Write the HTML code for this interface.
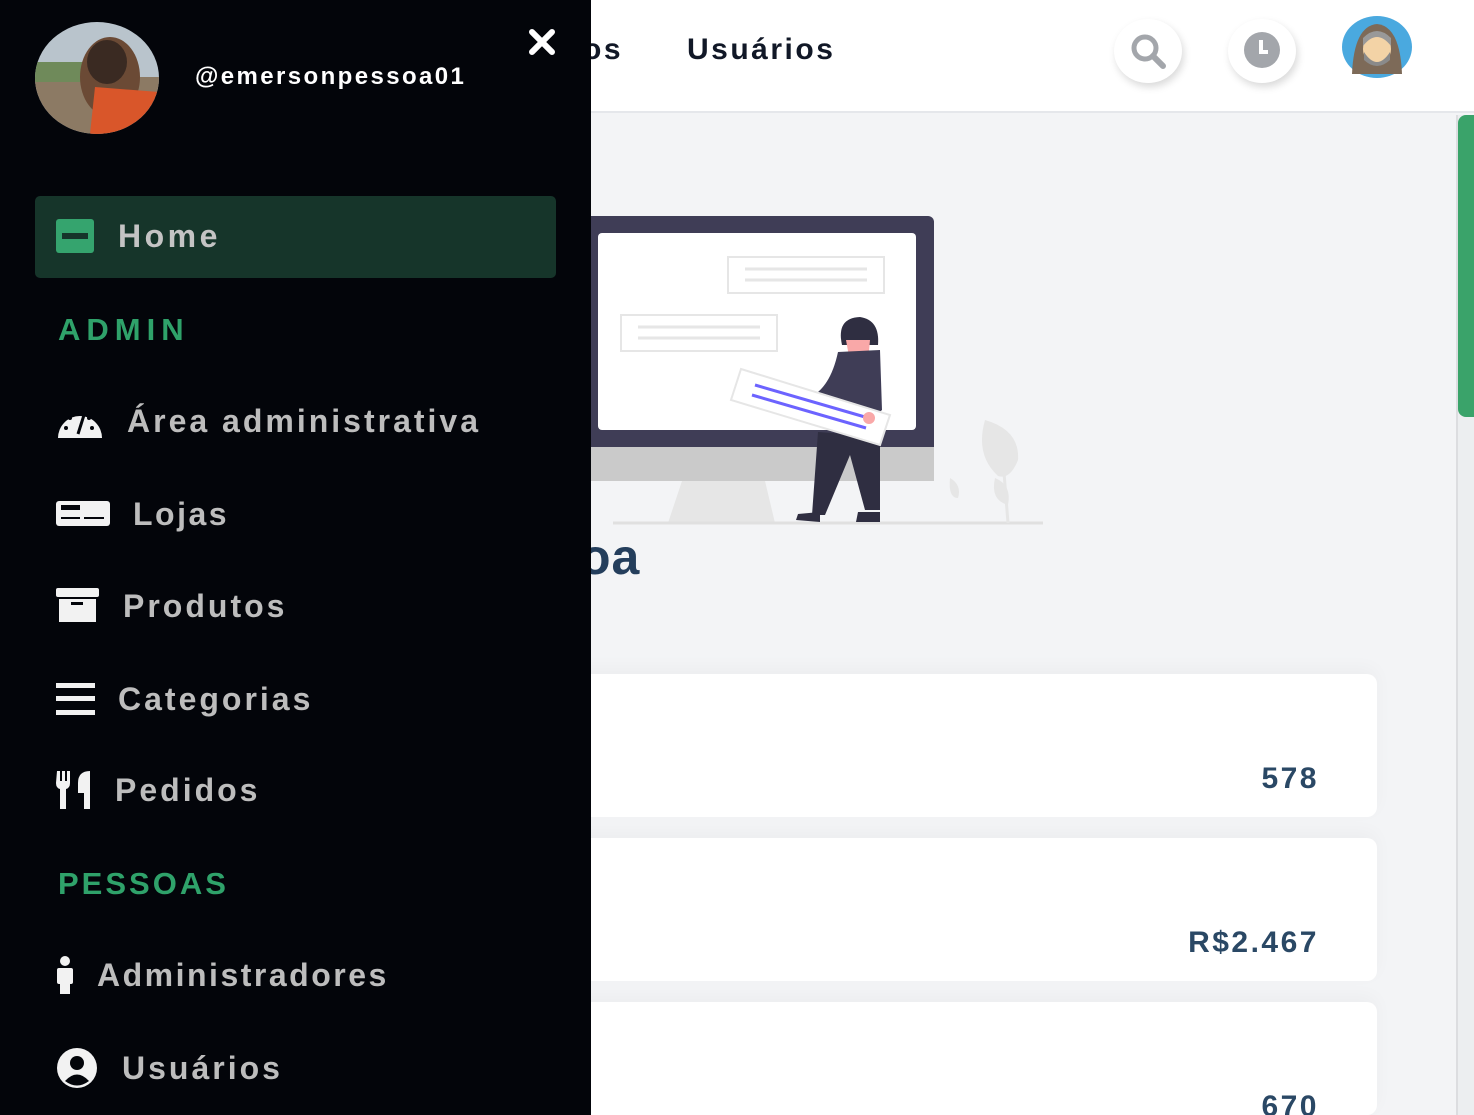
<!DOCTYPE html>
<html><head><meta charset="utf-8"><style>
*{margin:0;padding:0;box-sizing:border-box}
html,body{width:1474px;height:1115px;overflow:hidden}
body{background:#f3f4f6;font-family:"Liberation Sans",sans-serif;position:relative}
.hdr{position:absolute;left:0;top:0;width:1474px;height:113px;background:#fff;border-bottom:2px solid #e5e7eb}
.hnav{position:absolute;top:33px;font-size:30px;font-weight:bold;color:#111827;letter-spacing:2.5px}
.cbtn{position:absolute;top:19px;width:68px;height:64px;border-radius:50%;background:#fff;box-shadow:2px 4px 8px rgba(0,0,0,.15)}
.card{position:absolute;left:560px;width:817px;background:#fff;border-radius:10px;box-shadow:0 -6px 18px rgba(0,0,0,.03)}
.num{position:absolute;right:58px;font-size:30px;font-weight:bold;color:#2a4865;letter-spacing:2.5px}
.sb{position:absolute;left:0;top:0;width:591px;height:1115px;background:#03050a}
.item{position:absolute;left:0;font-size:32px;font-weight:bold;color:#bdbdbd;letter-spacing:3px}
.sec{position:absolute;left:58px;font-size:31px;font-weight:bold;color:#2fa26a}
.ic{position:absolute}
</style></head><body>
<div class="hdr">
<div class="hnav" style="left:583px">os</div>
<div class="hnav" style="left:687px">Usuários</div>
<div class="cbtn" style="left:1114px"><svg width="68" height="64" viewBox="0 0 68 64"><circle cx="31" cy="29" r="11" fill="none" stroke="#a3a6ab" stroke-width="5"/><line x1="39" y1="37" x2="49" y2="47" stroke="#a3a6ab" stroke-width="6" stroke-linecap="round"/></svg></div>
<div class="cbtn" style="left:1228px"><svg width="68" height="64" viewBox="0 0 68 64"><circle cx="34" cy="31" r="18" fill="#a3a6ab"/><path d="M33 21v12h7" fill="none" stroke="#fff" stroke-width="4"/></svg></div>
<svg style="position:absolute;left:1342px;top:16px" width="70" height="62" viewBox="0 0 70 62"><ellipse cx="35" cy="31" rx="35" ry="31" fill="#4aa9df"/><path d="M10 58 Q12 10 35 8 Q58 10 60 58 Z" fill="#7d6a58"/><ellipse cx="35" cy="33" rx="14" ry="16" fill="#f3d3a6"/><path d="M22 36 Q35 56 48 36 L48 44 Q35 56 22 44Z" fill="#8a8a8a"/><path d="M21 30 Q35 12 49 30 L49 22 Q35 8 21 22Z" fill="#999"/></svg>
</div>
<div style="position:absolute;left:1456px;top:115px;width:18px;height:1000px;background:#eceef0;border-left:2px solid #dcdde0"></div>
<div style="position:absolute;left:1458px;top:115px;width:16px;height:302px;background:#3aa36a;border-radius:8px 0 0 8px"></div>
<svg style="position:absolute;left:0;top:0" width="1100" height="540">
<rect x="560" y="216" width="374" height="265" rx="6" fill="#3f3d56"/>
<rect x="560" y="447" width="374" height="34" fill="#cacaca"/>
<rect x="598" y="233" width="318" height="197" rx="4" fill="#fff"/>
<path d="M682 481 L765 481 L775 523 L668 523Z" fill="#e6e6e6"/>
<line x1="613" y1="523" x2="1043" y2="523" stroke="#e0e0e0" stroke-width="3"/>
<rect x="728" y="257" width="156" height="36" fill="none" stroke="#e6e6e6" stroke-width="2"/>
<line x1="745" y1="269" x2="867" y2="269" stroke="#e6e6e6" stroke-width="3"/><line x1="745" y1="280" x2="867" y2="280" stroke="#e6e6e6" stroke-width="3"/>
<rect x="621" y="315" width="156" height="36" fill="none" stroke="#e6e6e6" stroke-width="2"/>
<line x1="638" y1="327" x2="760" y2="327" stroke="#e6e6e6" stroke-width="3"/><line x1="638" y1="338" x2="760" y2="338" stroke="#e6e6e6" stroke-width="3"/>
<path d="M985 420 Q1020 430 1018 460 Q1010 480 998 476 Q975 455 985 420Z" fill="#e6e6e6"/><path d="M1003 460 L1008 523" stroke="#e6e6e6" stroke-width="3"/>
<path d="M995 478 Q1012 485 1008 505 Q990 500 995 478Z" fill="#e6e6e6"/>
<path d="M950 478 Q962 485 958 498 Q948 498 950 478Z" fill="#e6e6e6"/>
<path d="M842 345 Q836 318 860 317 Q880 320 878 345Z" fill="#2f2e41"/>
<path d="M846 340 L870 340 L868 362 L850 362Z" fill="#f9a8a8"/>
<path d="M838 352 L880 350 L882 410 L870 420 L840 420 Q830 395 818 392 Q832 380 838 352Z" fill="#3f3d56"/>
<path d="M818 432 L860 435 L880 440 L880 510 L865 510 L850 455 L825 515 L812 515Z" fill="#2f2e41"/>
<path d="M798 514 L820 512 L820 522 L796 520Z M858 512 L880 512 L880 522 L856 522Z" fill="#2f2e41"/>
<path d="M741 369 L890 415 L880 445 L731 400Z" fill="#fff" stroke="#e6e6e6" stroke-width="2"/>
<line x1="755" y1="385" x2="865" y2="417" stroke="#6c63ff" stroke-width="3"/><line x1="752" y1="395" x2="866" y2="428" stroke="#6c63ff" stroke-width="3"/>
<circle cx="869" cy="418" r="6" fill="#f9a8a8"/>
</svg>
<div style="position:absolute;left:580px;top:528px;font-size:50px;font-weight:bold;color:#243e5c;letter-spacing:1px">oa</div>
<div class="card" style="top:674px;height:143px"><div class="num" style="top:88px">578</div></div>
<div class="card" style="top:838px;height:143px"><div class="num" style="top:88px">R$2.467</div></div>
<div class="card" style="top:1002px;height:113px"><div class="num" style="top:88px">670</div></div>

<div class="sb">
<svg style="position:absolute;left:35px;top:22px" width="124" height="112" viewBox="0 0 124 112"><defs><clipPath id="c"><ellipse cx="62" cy="56" rx="62" ry="56"/></clipPath></defs><g clip-path="url(#c)"><rect width="124" height="112" fill="#b9c4cc"/><rect y="55" width="124" height="57" fill="#8c7a64"/><rect x="0" y="40" width="60" height="20" fill="#6f8a5a"/><ellipse cx="75" cy="55" rx="30" ry="40" fill="#6b4a35"/><path d="M60 65 L124 70 L124 112 L55 112Z" fill="#d9562a"/><ellipse cx="72" cy="40" rx="20" ry="22" fill="#3a2a22"/></g></svg>
<div style="position:absolute;left:195px;top:63px;font-size:24px;font-weight:bold;color:#fff;letter-spacing:2.4px">@emersonpessoa01</div>
<svg style="position:absolute;left:527px;top:27px" width="30" height="30" viewBox="0 0 30 30"><path d="M5 5L25 25M25 5L5 25" stroke="#fff" stroke-width="6" stroke-linecap="round"/></svg>
<div style="position:absolute;left:35px;top:196px;width:521px;height:82px;background:#16352a;border-radius:5px"></div>
<svg class="ic" style="left:56px;top:219px" width="38" height="34"><rect width="38" height="34" rx="3" fill="#35a46e"/><rect x="6" y="14" width="26" height="6" fill="#16352a"/></svg>
<div class="item" style="left:118px;top:218px;color:#c4c4c4;letter-spacing:3.5px">Home</div>
<div class="sec" style="top:312px;letter-spacing:6px">ADMIN</div>
<svg class="ic" style="left:56px;top:404px" width="48" height="34" viewBox="0 0 48 34"><path d="M2 34 A22 22 0 0 1 46 34Z" fill="#f2f2f2"/><circle cx="10" cy="24" r="2" fill="#03050a"/><circle cx="14" cy="14" r="2" fill="#03050a"/><circle cx="24" cy="9" r="2" fill="#03050a"/><circle cx="36" cy="24" r="2" fill="#03050a"/><circle cx="33" cy="14" r="2" fill="#03050a"/><path d="M22 30 L28 11" stroke="#03050a" stroke-width="3"/></svg>
<div class="item" style="left:127px;top:403px">Área administrativa</div>
<svg class="ic" style="left:56px;top:501px" width="54" height="25"><rect width="54" height="25" rx="3" fill="#f2f2f2"/><rect x="5" y="4" width="19" height="5" fill="#03050a"/><rect x="5" y="16" width="19" height="2" fill="#03050a"/><rect x="28" y="16" width="20" height="2" fill="#03050a"/></svg>
<div class="item" style="left:133px;top:496px;letter-spacing:2.5px">Lojas</div>
<svg class="ic" style="left:56px;top:588px" width="43" height="34"><rect width="43" height="9" rx="2" fill="#f2f2f2"/><rect x="3" y="11" width="37" height="23" fill="#f2f2f2"/><rect x="15" y="14" width="12" height="3" fill="#03050a"/></svg>
<div class="item" style="left:123px;top:588px">Produtos</div>
<svg class="ic" style="left:56px;top:683px" width="39" height="32"><rect y="0" width="39" height="5" fill="#f2f2f2"/><rect y="13" width="39" height="5" fill="#f2f2f2"/><rect y="27" width="39" height="5" fill="#f2f2f2"/></svg>
<div class="item" style="left:118px;top:681px">Categorias</div>
<svg class="ic" style="left:56px;top:771px" width="36" height="38" viewBox="0 0 36 38"><path d="M1 0h3v10h2V0h3v10h2V0h3v12q0 5-4 6v20h-6V18q-4-1-4-6Z" fill="#f2f2f2"/><path d="M22 12q0-12 12-12v38h-6V22h-6Z" fill="#f2f2f2"/></svg>
<div class="item" style="left:115px;top:772px">Pedidos</div>
<div class="sec" style="top:866px;letter-spacing:3px">PESSOAS</div>
<svg class="ic" style="left:56px;top:956px" width="18" height="38"><circle cx="9" cy="5" r="5" fill="#f2f2f2"/><rect x="1" y="12" width="16" height="16" rx="2" fill="#f2f2f2"/><rect x="4" y="26" width="10" height="12" fill="#f2f2f2"/></svg>
<div class="item" style="left:97px;top:957px;letter-spacing:2.5px">Administradores</div>
<svg class="ic" style="left:56px;top:1048px" width="42" height="40" viewBox="0 0 42 40"><circle cx="21" cy="20" r="20" fill="#f2f2f2"/><circle cx="21" cy="15" r="7" fill="#03050a"/><path d="M9 33 Q21 20 33 33 Q21 42 9 33Z" fill="#03050a"/></svg>
<div class="item" style="left:122px;top:1050px">Usuários</div>
</div>
</body></html>
